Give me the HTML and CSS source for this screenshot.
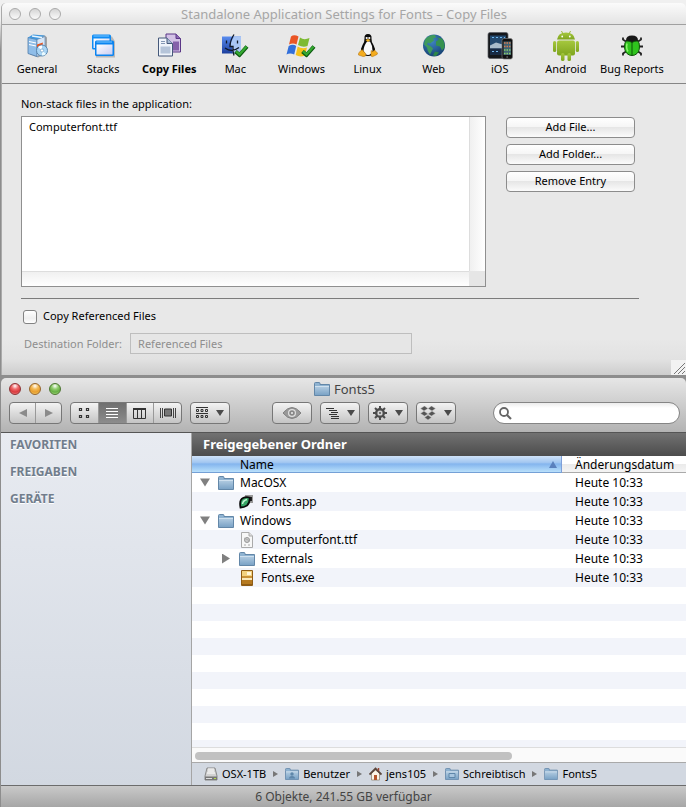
FILE: index.html
```html
<!DOCTYPE html>
<html lang="de">
<head>
<meta charset="utf-8">
<meta name="viewport" content="width=device-width, initial-scale=1">
<title>Standalone Application Settings</title>
<link rel="stylesheet" href="styles.css">
</head>
<body>
<svg class="defs" aria-hidden="true">
  <defs>
    <linearGradient id="gFolder" x1="0" y1="0" x2="0" y2="1"><stop offset="0" stop-color="#b4cde2"/><stop offset="1" stop-color="#7ba3c6"/></linearGradient>
    <linearGradient id="gBlue" x1="0" y1="0" x2="0" y2="1"><stop offset="0" stop-color="#5a8df0"/><stop offset="1" stop-color="#1c3f9e"/></linearGradient>
    <linearGradient id="gPane" x1="0" y1="0" x2="1" y2="1"><stop offset="0" stop-color="#ffffff"/><stop offset="1" stop-color="#c9cdf2"/></linearGradient>
    <linearGradient id="gDroid" x1="0" y1="0" x2="0" y2="1"><stop offset="0" stop-color="#a6c83e"/><stop offset="1" stop-color="#7fa51f"/></linearGradient>
    <radialGradient id="gGlobe" cx=".4" cy=".3" r=".8"><stop offset="0" stop-color="#3f86c4"/><stop offset="1" stop-color="#123a6b"/></radialGradient>
    <symbol id="folder" viewBox="0 0 16 14">
      <path d="M.5 3V1.5Q.5.5 1.5.5H5Q6 .5 6 1.5V2.500H15.500V13.500H.5z" fill="#8fb3d1" stroke="#6387a8"/>
      <path d="M1 4H15V13H1z" fill="url(#gFolder)"/>
      <path d="M1 4.500H15" stroke="#cfe0ee"/>
    </symbol>
    <symbol id="check" viewBox="0 0 15 13">
      <path d="M1.500 7 L5.500 10.500 L13 2" fill="none" stroke="#0c5a10" stroke-width="4"/>
      <path d="M2 6.800 L5.500 9.800 L12.600 2" fill="none" stroke="#35a832" stroke-width="2.400"/>
    </symbol>
  </defs>
</svg>

<main class="desktop">
<section class="window settings">
  <header class="titlebar">
    <div class="lights idle"><button type="button" aria-label="Close"></button><button type="button" aria-label="Minimize"></button><button type="button" aria-label="Zoom"></button></div>
    <h1>Standalone Application Settings for Fonts – Copy Files</h1>
  </header>

  <nav class="tabs">
    <button type="button">
      <svg width="24" height="24" viewBox="0 0 24 24"><path d="M5 5L10 2H20L22 4V20L13 24 5 21z" fill="#777" opacity=".6"/><path d="M3 4L12 6V23L3 20z" fill="#8fbde8" stroke="#4f7ba8" stroke-width=".8"/><path d="M12 6L20 3V19L12 23z" fill="#d5e6f8" stroke="#6e90b5" stroke-width=".8"/><path d="M3 4L8 1 20 2 12 6z" fill="#3f97de"/><path d="M7 2.500L17 4" stroke="#e9f6ff" stroke-width="1.500"/><path d="M4 8L11 9.500M4 11L11 12.500" stroke="#fff" stroke-width="1.200"/><path d="M12 11L18 9 17 14 12 18z" fill="#e8531e"/><circle cx="17" cy="17" r="5.500" fill="#a8d4f5" stroke="#5b88af"/><path d="M17 17L13 13.500A5 5 0 0 1 17 12z" fill="#fff"/><path d="M17 17L21 20.500A5 5 0 0 1 17 22z" fill="#eafaff"/><circle cx="17" cy="17" r="1.600" fill="#fff" stroke="#6b9cc4" stroke-width=".7"/></svg>
      <span>General</span></button>
    <button type="button">
      <svg width="24" height="24" viewBox="0 0 24 24"><path d="M3 3H21L24 8V24H5z" fill="#888" opacity=".5"/><rect x="1" y="1" width="19" height="15" rx="1.500" fill="#0f8cf5"/><rect x="2.500" y="5" width="16" height="9.500" fill="url(#gPane)"/><path d="M2.500 2.500H18" stroke="#7cc8ff"/><rect x="4" y="7" width="19" height="15.500" rx="1.500" fill="#0a84f0"/><rect x="5.500" y="11" width="16" height="10" fill="url(#gPane)"/><path d="M5.500 8.500H21" stroke="#7cc8ff"/></svg>
      <span>Stacks</span></button>
    <button type="button" class="active" aria-current="page">
      <svg width="24" height="24" viewBox="0 0 24 24"><path d="M9 .5H19L23.500 5V18.500H9z" fill="#d3c2e6" stroke="#5b3787"/><path d="M19 .5V5H23.500" fill="#8d68b5" stroke="#5b3787"/><path d="M16 8H22V17H16z" fill="#8560aa"/><path d="M1.500 4.500H10L15.500 10V22.500H1.500z" fill="#eff4fb" stroke="#46597a"/><path d="M10 4.500V10H15.500" fill="#a7bbd4" stroke="#46597a"/><path d="M4 8H8M4 10H8" stroke="#8598b5"/><path d="M3.500 13H13.500V20H3.500z" fill="#b5c4d9"/></svg>
      <span>Copy Files</span></button>
    <button type="button">
      <svg width="28" height="24" viewBox="0 0 28 24"><path d="M1 3H20V20H1z" fill="url(#gBlue)"/><path d="M13 3H20V20H12Q11 17 11 13H9Q10 7 13 3z" fill="#a9c6f5"/><path d="M13 1Q9 7 9 13H12Q11.500 18 13 22M5.500 7V10M16.500 7V10M4 14.500Q11 19.500 18 14" fill="none" stroke="#101828" stroke-width="1.300"/><use href="#check" x="13" y="11" width="15" height="13"/></svg>
      <span>Mac</span></button>
    <button type="button">
      <svg width="30" height="24" viewBox="0 0 30 24"><path d="M5 3Q8 .5 12.500 3L10.500 11Q7 9 3 11z" fill="#ea5525"/><path d="M14 4Q18 7 23.500 4.500L21.500 12.500Q17 14.500 12 11.500z" fill="#7dba32"/><path d="M2.700 12.500Q7 10 10.200 12.500L8.200 21Q4 19 .5 21z" fill="#326fdb"/><path d="M11.700 13Q16 16 21 14L19 22Q14 24 9.700 21.500z" fill="#f5c21b"/><use href="#check" x="15" y="11" width="15" height="13"/></svg>
      <span>Windows</span></button>
    <button type="button">
      <svg width="20" height="24" viewBox="0 0 20 24"><path d="M10 .5Q6 .5 6.500 5Q6.800 8 4.500 11.500Q2.500 15 3 19Q6 22.500 10 22.500T17 19Q17.500 15 15.500 11.500Q13.200 8 13.500 5Q14 .5 10 .5z" fill="#0a0a0a"/><path d="M9 8Q5.500 13 5.500 17Q7 21.500 10 21.500T14.500 17Q14.500 12 12 8z" fill="#fafafa"/><circle cx="8.700" cy="4.500" r="1.100" fill="#fff"/><circle cx="11.300" cy="4.500" r="1.100" fill="#fff"/><path d="M7.500 6.500L10 5.500 12.500 6.500 10 8.500z" fill="#f2b01e"/><path d="M4 16L8 20.500Q8 23.500 5 23L.5 21.500Q0 20 1.500 18.500z" fill="#f4ac1f" stroke="#ad6d0c" stroke-width=".5"/><path d="M13 17Q15 19 16.500 16.500L19.500 19.500Q20 21 17 22Q14 24 13 22.500z" fill="#f4ac1f" stroke="#ad6d0c" stroke-width=".5"/></svg>
      <span>Linux</span></button>
    <button type="button">
      <svg width="24" height="24" viewBox="0 0 24 24"><circle cx="12" cy="12" r="11" fill="url(#gGlobe)"/><path d="M3 6Q7 1 13 1.500L14 4 11 5 12 7 8 10 6 9 5 11 9 13 11 15 8 21Q5 17 5 14L2 11z" fill="#3f9a5c"/><path d="M15 4L20 5Q23 9 22.500 14L20 17 18 13 14 12 14 8 17 6z" fill="#35914f"/><path d="M13 18L17 19 14 22.500 11 22z" fill="#2e8748"/></svg>
      <span>Web</span></button>
    <button type="button">
      <svg width="26" height="28" viewBox="0 0 26 28"><rect x="1" y="1" width="20" height="26" rx="2" fill="#15171b" stroke="#5c5f66" stroke-width=".7"/><rect x="3" y="4" width="16" height="19" fill="#24496e"/><path d="M3 14L9 11 19 14V17H3z" fill="#a9bccb"/><path d="M3 17H19V23H3z" fill="#182a44"/><path d="M5 6H7M9 6H11M13 6H15M17 6H18M5 20H7M9 20H11" stroke="#6fb7ee"/><rect x="15" y="7" width="10.500" height="20.500" rx="2" fill="#111" stroke="#777" stroke-width=".7"/><rect x="16.500" y="10" width="7.500" height="13.500" fill="#3f6273"/><path d="M17 11.500H24M17 15H24" stroke="#d97a4c" stroke-width="1.500" stroke-dasharray="1.500 1"/><path d="M17 18.500H24M17 22H24" stroke="#8bd06a" stroke-width="1.500" stroke-dasharray="1.500 1"/><circle cx="20.200" cy="25.500" r="1" fill="#555"/></svg>
      <span>iOS</span></button>
    <button type="button">
      <svg width="28" height="31" viewBox="0 0 28 31"><g fill="url(#gDroid)"><path d="M5 9.500Q6 2.500 14 2.500T23 9.500z"/><rect x="5" y="10.500" width="18" height="15" rx="2"/><rect x="1" y="11" width="3.200" height="11" rx="1.600"/><rect x="23.800" y="11" width="3.200" height="11" rx="1.600"/><rect x="9" y="23" width="3.500" height="8" rx="1.600"/><rect x="15.500" y="23" width="3.500" height="8" rx="1.600"/></g><path d="M9.500 1L11 4M18.500 1L17 4" stroke="#97b936"/><circle cx="10.200" cy="6.500" r=".9" fill="#fff"/><circle cx="17.800" cy="6.500" r=".9" fill="#fff"/></svg>
      <span>Android</span></button>
    <button type="button">
      <svg width="24" height="24" viewBox="0 0 24 24"><path d="M6 8L3 6V4M18 8L21 6V4M5 13H1M19 13H23M6 18L3 20V22M18 18L21 20V22" fill="none" stroke="#222" stroke-width="1.800"/><path d="M6 7Q6 2 12 2T18 7L16 10H8z" fill="#171717"/><path d="M12 9Q7 6 5 9Q3.500 17 7 20Q9 22 12 22T17 20Q20.500 17 19 9Q17 6 12 9z" fill="#2fc41d" stroke="#0d5208"/><path d="M7 10Q6 15 8 18" fill="none" stroke="#8cf56c" stroke-width="1.500"/><path d="M12 9V22" stroke="#0d5208"/></svg>
      <span>Bug Reports</span></button>
  </nav>

  <div class="pane">
    <p class="caption" id="files-caption">Non-stack files in the application:</p>
    <div class="files">
      <div class="listbox">
        <ul aria-labelledby="files-caption"><li>Computerfont.ttf</li></ul>
        <div class="track-v"></div><div class="track-h"></div><div class="track-corner"></div>
      </div>
      <div class="actions">
        <button type="button">Add File...</button>
        <button type="button">Add Folder...</button>
        <button type="button">Remove Entry</button>
      </div>
    </div>
    <hr>
    <div class="option"><input type="checkbox" id="copy-ref"><label for="copy-ref">Copy Referenced Files</label></div>
    <div class="destination"><label for="dest">Destination Folder:</label><input type="text" id="dest" value="Referenced Files" disabled></div>
  </div>
  <svg class="grip" width="15" height="15" viewBox="0 0 15 15"><path d="M3 14L14 3M7 14L14 7M11 14L14 11" stroke="#777"/></svg>
</section>

<section class="window finder">
  <header class="chrome">
    <div class="titlerow">
      <div class="lights"><button type="button" class="red" aria-label="Schließen"></button><button type="button" class="amber" aria-label="Minimieren"></button><button type="button" class="green" aria-label="Zoomen"></button></div>
      <h2><svg width="16" height="14"><use href="#folder"/></svg>Fonts5</h2>
    </div>
    <div class="toolbar">
      <div class="group nav">
        <button type="button" aria-label="Zurück"><svg width="10" height="10" viewBox="0 0 10 10"><path d="M9 1V9L1 5z" fill="#8b8b8b"/></svg></button>
        <button type="button" aria-label="Vorwärts"><svg width="10" height="10" viewBox="0 0 10 10"><path d="M1 1V9L9 5z" fill="#8b8b8b"/></svg></button>
      </div>
      <div class="group views">
        <button type="button" aria-label="Symbole"><svg width="12" height="12" viewBox="0 0 12 12"><path d="M1.500 1.500h2v2h-2zM8.500 1.500h2v2h-2zM1.500 8.500h2v2h-2zM8.500 8.500h2v2h-2z" fill="none" stroke="#333" stroke-width="1.200"/></svg></button>
        <button type="button" class="on" aria-label="Liste" aria-pressed="true"><svg width="12" height="12" viewBox="0 0 12 12"><path d="M0 1.500H12M0 4.500H12M0 7.500H12M0 10.500H12" stroke="#fff"/></svg></button>
        <button type="button" aria-label="Spalten"><svg width="13" height="11" viewBox="0 0 13 11"><path d="M.5 1V10.500H12.500V1M4.500 1V10M8.500 1V10" fill="none" stroke="#333"/><path d="M0 1H13" stroke="#333" stroke-width="2"/></svg></button>
        <button type="button" aria-label="Cover Flow"><svg width="16" height="12" viewBox="0 0 16 12"><path d="M.5 1V11M2.500 1V11M13.500 1V11M15.500 1V11" stroke="#444"/><path d="M4.500 2H11.500V9H4.500z" fill="#777" stroke="#333"/></svg></button>
      </div>
      <button type="button" class="tool" aria-label="Ausrichten"><svg width="12" height="12" viewBox="0 0 12 12"><path d="M0 .5H12M0 6.500H12" stroke="#333"/><path d="M.5 2.500h2v2h-2zM5 2.500h2v2h-2zM9.500 2.500h2v2h-2zM.5 8.500h2v2h-2zM5 8.500h2v2h-2zM9.500 8.500h2v2h-2z" fill="none" stroke="#333"/></svg><i class="caret"></i></button>
      <button type="button" class="tool eye" aria-label="Übersicht"><svg width="20" height="12" viewBox="0 0 20 12"><path d="M1 6Q10-5 19 6Q10 17 1 6z" fill="#999" stroke="#818181"/><circle cx="10" cy="6" r="4" fill="#e0e0e0"/><circle cx="10" cy="6" r="2.800" fill="#888"/><circle cx="10" cy="6" r="1" fill="#eee"/></svg></button>
      <button type="button" class="tool" aria-label="Gliederung"><svg width="13" height="12" viewBox="0 0 13 12"><path d="M0 1.500H8M3 3.500H11M5 5.500H12M3 7.500H11M5 9.500H13M5 11.500H13" stroke="#333"/></svg><i class="caret"></i></button>
      <button type="button" class="tool" aria-label="Aktionen"><svg width="14" height="14" viewBox="0 0 14 14"><path d="M7 0V14M0 7H14M2 2L12 12M12 2L2 12" stroke="#4b4b4b" stroke-width="2"/><circle cx="7" cy="7" r="4" fill="none" stroke="#4b4b4b" stroke-width="2"/><circle cx="7" cy="7" r="2.600" fill="#d2d2d2"/><circle cx="7" cy="7" r="1" fill="#555"/></svg><i class="caret"></i></button>
      <button type="button" class="tool" aria-label="Dropbox"><svg width="16" height="14" viewBox="0 0 16 14"><path d="M4.500 0L8 2.500 4 5 .5 2.500zM11.500 0L8 2.500 12 5 15.500 2.500zM4 5L8 8 4.500 10 .5 7.500zM12 5L8 8 11.500 10 15.500 7.500zM8 9L11.500 11.500 8 14 4.500 11.500z" fill="#555" stroke="#cfcfcf" stroke-width=".5"/></svg><i class="caret"></i></button>
      <label class="search"><svg width="13" height="13" viewBox="0 0 13 13"><circle cx="5" cy="5" r="4" fill="none" stroke="#666" stroke-width="1.800"/><path d="M8 8L12 12" stroke="#666" stroke-width="2.200"/></svg><input type="search" aria-label="Suchen"></label>
    </div>
  </header>

  <div class="body">
    <aside class="sidebar"><h3>FAVORITEN</h3><h3>FREIGABEN</h3><h3>GERÄTE</h3></aside>
    <div class="content">
      <h3 class="banner">Freigegebener Ordner</h3>
      <table>
        <thead><tr><th class="name">Name<svg width="8" height="7" viewBox="0 0 8 7"><path d="M4 0L8 7H0z" fill="#5a80bd"/></svg></th><th>Änderungsdatum</th></tr></thead>
        <tbody>
          <tr><td><div class="cell"><i class="tri open"></i><svg width="16" height="14"><use href="#folder"/></svg>MacOSX</div></td><td>Heute 10:33</td></tr>
          <tr><td><div class="cell child"><i class="tri"></i><svg width="16" height="16" viewBox="0 0 16 16"><path d="M6 1H14V9H6z" fill="#999"/><path d="M9 3H13V7H9z" fill="#222"/><path d="M1.500 13.500Q0 6 4 4Q7 2.500 10.500 3.500Q11 9 8 11.500Q5 13.500 1.500 13.500z" fill="#38a566" stroke="#0a0a0a" stroke-width="1.800"/><path d="M3.500 10Q4 6.500 8 5.500" stroke="#c6f5d6" fill="none" stroke-width="1.400"/></svg>Fonts.app</div></td><td>Heute 10:33</td></tr>
          <tr><td><div class="cell"><i class="tri open"></i><svg width="16" height="14"><use href="#folder"/></svg>Windows</div></td><td>Heute 10:33</td></tr>
          <tr><td><div class="cell child"><i class="tri"></i><svg width="16" height="16" viewBox="0 0 16 16"><path d="M2.500.5H10L13.500 4V15.500H2.500z" fill="#f7f7f7" stroke="#aaa"/><path d="M10 .5V4H13.500" fill="#ddd" stroke="#aaa"/><circle cx="8" cy="8" r="2.500" fill="#ccc" stroke="#999"/><path d="M5 6L11 9M5 13H7M9 13H11" stroke="#aaa"/></svg>Computerfont.ttf</div></td><td>Heute 10:33</td></tr>
          <tr><td><div class="cell child"><i class="tri closed"></i><svg width="16" height="14"><use href="#folder"/></svg>Externals</div></td><td>Heute 10:33</td></tr>
          <tr><td><div class="cell child"><i class="tri"></i><svg width="16" height="16" viewBox="0 0 16 16"><rect x="2" y="0" width="12" height="16" rx="1" fill="#8f5c14"/><path d="M3 1H13V6H3z" fill="#f3d27f"/><path d="M8 2H12V5H8z" fill="#fff6dc"/><path d="M3 6H13V8H3z" fill="#c99238"/><path d="M3 8H13V10H3z" fill="#fbe9bb"/><path d="M3 10H13V14H3z" fill="#b67a20"/></svg>Fonts.exe</div></td><td>Heute 10:33</td></tr>
        </tbody>
      </table>
      <div class="stripes"></div>
      <div class="scroller"><div class="thumb"></div></div>
      <nav class="path">
        <a href="#"><svg width="14" height="14" viewBox="0 0 14 14"><path d="M3 1H11L13 9V13H1V9z" fill="#d2d2d2" stroke="#888"/><path d="M4 2H10M4 4H10M3 6H11" stroke="#fff"/><path d="M1 9.500H13V13H1z" fill="#777"/><path d="M2 11.500H8" stroke="#ddd"/><path d="M10 11.500H12" stroke="#b7dd45"/></svg>OSX-1TB</a><i class="sep"></i>
        <a href="#"><svg width="14" height="12" viewBox="0 0 14 12"><use href="#folder" width="14" height="12"/><circle cx="7" cy="6" r="1.700" fill="#5f87aa"/><path d="M4 10.500Q4 8 7 8T10 10.500z" fill="#5f87aa"/></svg>Benutzer</a><i class="sep"></i>
        <a href="#"><svg width="13" height="14" viewBox="0 0 13 14"><path d="M2.500 6V13H10.500V6L6.500 3z" fill="#fbf4e7" stroke="#877963" stroke-width=".7"/><path d="M.5 7.500L6.500 1.500 12.500 7.500" fill="none" stroke="#5a463b" stroke-width="1.800"/><path d="M5 8H8V13H5z" fill="#b4552b"/><path d="M9.500 1V4" stroke="#9b4532" stroke-width="1.500"/></svg>jens105</a><i class="sep"></i>
        <a href="#"><svg width="14" height="12" viewBox="0 0 14 12"><use href="#folder" width="14" height="12"/><path d="M4 5.500H10V9.500H4z" fill="#a9c6df" stroke="#5f87aa"/></svg>Schreibtisch</a><i class="sep"></i>
        <a href="#"><svg width="14" height="12" viewBox="0 0 16 14"><use href="#folder" width="16" height="14"/></svg>Fonts5</a>
      </nav>
    </div>
  </div>
  <footer class="status">6 Objekte, 241.55 GB verfügbar</footer>
</section>
</main>
</body>
</html>
```
FILE: styles.css
```css
* { box-sizing: border-box; }

body {
  margin: 0;
  font-family: "Noto Sans", "Open Sans", sans-serif;
  font-size: 11px;
  line-height: 16px;
  color: #000;
  background: #8d8d8d;
}

h1, h2, h3, p, ul { margin: 0; padding: 0; font-weight: normal; }
ul { list-style: none; }
button, input { font: inherit; color: inherit; }
button { padding: 0; border: 0; background: none; }
svg { display: block; flex: none; }
.defs { position: absolute; width: 0; height: 0; }

.desktop {
  display: flex;
  flex-direction: column;
  gap: 3px;
  min-height: 100vh;
  padding: 3px 0 0 1px;
  background: linear-gradient(#f0f0f0 0, #f0f0f0 20px, #8d8d8d 50px);
}

/* Window controls */
.lights { display: flex; gap: 8px; }
.lights button {
  width: 12px;
  height: 12px;
  border-radius: 50%;
  border: 1px solid #777;
}
.lights.idle button { border-color: #aaa; background: linear-gradient(#d5d5d5, #fafafa); }
.lights .red { border-color: #8d3133; background: radial-gradient(circle at 50% 20%, #fff 0, #f0686a 35%, #d83a3d 65%, #f99 100%); }
.lights .amber { border-color: #96642a; background: radial-gradient(circle at 50% 20%, #fff 0, #f4ba55 35%, #e79d2d 65%, #fde07a 100%); }
.lights .green { border-color: #4b752f; background: radial-gradient(circle at 50% 20%, #fff 0, #8fcc6c 35%, #65ae43 65%, #c5f09a 100%); }

/* Settings window */
.settings {
  position: relative;
  border-left: 1px solid #aaa;
  border-radius: 5px 5px 0 0;
  background: linear-gradient(to top, #cdcdcd 0, #e2e2e2 16px, #e8e8e8 36px);
}
.titlebar {
  display: grid;
  grid-template-columns: 60px 1fr 60px;
  align-items: center;
  height: 22px;
  padding: 0 7px;
  border-bottom: 1px solid #a0a0a0;
  border-radius: 5px 5px 0 0;
  background: linear-gradient(#fbfbfb, #e4e4e4);
}
.titlebar h1 { font-size: 13px; color: #a6a6a6; text-align: center; white-space: nowrap; }

.tabs {
  display: grid;
  grid-template-columns: repeat(10, 1fr);
  height: 59px;
  padding: 5px 21px 0 2px;
  border-bottom: 1px solid #858585;
}
.tabs button {
  display: flex;
  flex-direction: column;
  align-items: center;
  justify-content: flex-start;
  min-width: 0;
  white-space: nowrap;
}
.tabs svg { height: 31px; }
.tabs .active { font-weight: bold; }

.pane { padding: 12px 47px 21px 19px; }
.caption { margin-bottom: 4px; }
.files { display: flex; gap: 20px; padding-right: 4px; }
.listbox {
  flex: 1;
  display: grid;
  grid-template-columns: 1fr 16px;
  grid-template-rows: 1fr 15px;
  height: 171px;
  border: 1px solid #8f8f8f;
  background: #fff;
}
.listbox ul { padding: 2px 7px; }
.track-v { border-left: 1px solid #ddd; background: linear-gradient(to right, #f0f0f0, #fff); }
.track-h { border-top: 1px solid #ddd; background: linear-gradient(#f0f0f0, #fff); }
.track-corner { background: #e6e6e6; }
.actions { display: flex; flex-direction: column; gap: 6px; width: 129px; padding-top: 1px; }
.actions button {
  height: 21px;
  padding-bottom: 2px;
  border: 1px solid #8c8c8c;
  border-radius: 4px;
  background: linear-gradient(#fff 0, #f6f6f6 45%, #e6e6e6 50%, #fbfbfb 100%);
  line-height: 16px;
}
hr { height: 1px; margin: 11px 0 9px; border: 0; background: #7c7c7c; }
.option { display: flex; align-items: center; gap: 6px; padding-left: 1px; }
.option input {
  appearance: none;
  width: 14px;
  height: 14px;
  margin: 2px 0 0 1px;
  border: 1px solid #828282;
  border-radius: 3px;
  background: linear-gradient(#fff, #eee 60%, #fff);
}
.destination { display: flex; align-items: center; gap: 8px; margin-top: 9px; padding-left: 3px; color: #8e8e8e; }
.destination input {
  width: 282px;
  height: 21px;
  padding: 0 7px;
  border: 1px solid #bebebe;
  background: #e6e6e6;
}
.grip { position: absolute; right: 0; bottom: 0; background: #f2f2f2; }

/* Finder window */
.finder { flex: 1; display: flex; flex-direction: column; border-radius: 5px 5px 0 0; }
.chrome {
  height: 55px;
  padding: 0 6px 0 8px;
  border-bottom: 1px solid #555;
  border-radius: 5px 5px 0 0;
  background: linear-gradient(#e6e6e6, #b3b3b3);
}
.titlerow {
  display: grid;
  grid-template-columns: 60px 1fr 60px;
  align-items: center;
  height: 22px;
  margin-bottom: 2px;
}
.titlerow h2 {
  display: flex;
  align-items: center;
  justify-content: center;
  gap: 4px;
  font-size: 13px;
  color: #444;
}
.toolbar { display: flex; gap: 8px; height: 22px; }
.group, .tool {
  display: flex;
  align-items: center;
  justify-content: center;
  height: 22px;
  border: 1px solid #777;
  border-radius: 4px;
  background: linear-gradient(#f3f3f3, #c4c4c4);
}
.tool { gap: 8px; width: 40px; }
.tool.eye { margin-left: 34px; }
.group button {
  flex: 1;
  display: flex;
  align-items: center;
  justify-content: center;
  height: 20px;
}
.group button + button { border-left: 1px solid #999; }
.nav { width: 53px; }
.views { width: 112px; }
.views .on { background: linear-gradient(#6f6f6f, #8c8c8c); }
.caret { border: 4px solid transparent; border-top: 6px solid #4b4b4b; border-bottom: 0; }
.search {
  flex: 1;
  display: flex;
  align-items: center;
  gap: 4px;
  min-width: 80px;
  height: 22px;
  margin-left: 29px;
  padding: 0 6px 0 5px;
  border: 1px solid #858585;
  border-radius: 11px;
  background: linear-gradient(#ececec, #fff 5px);
}
.search input { flex: 1; min-width: 0; border: 0; outline: 0; background: none; }

.body { flex: 1; display: flex; }
.sidebar {
  width: 191px;
  padding: 4px 9px;
  border-right: 1px solid #a5a5a5;
  background: linear-gradient(#e8ebf1, #d2d8e1);
}
.sidebar h3 { margin-bottom: 11px; font-size: 12px; font-weight: bold; color: #717d8c; text-shadow: 0 1px 0 #fff; }
.content { flex: 1; min-width: 0; display: flex; flex-direction: column; background: #fff; }
.banner {
  height: 23px;
  padding: 0 11px;
  font-size: 13px;
  font-weight: bold;
  line-height: 22px;
  color: #fff;
  background: linear-gradient(#727272, #4c4c4c);
}

table { width: 100%; border-spacing: 0; table-layout: fixed; font-size: 12px; }
th {
  height: 17px;
  padding: 1px 0 0 14px;
  border-bottom: 1px solid #aaa;
  font-weight: normal;
  line-height: 15px;
  text-align: left;
  background: linear-gradient(#fff 0, #fff 50%, #eaeaea 50%, #f4f4f4 100%);
}
th.name {
  width: 370px;
  padding-left: 48px;
  border-right: 1px solid #7f9fd8;
  border-bottom-color: #74a0d6;
  background: linear-gradient(#cfe2f8 0, #a3c7f1 40%, #84b5ee 50%, #b9e0fb 100%);
}
th.name svg { float: right; margin: 4px 4px 0 0; }
td { height: 19px; padding: 0 0 0 13px; line-height: 19px; white-space: nowrap; }
th:last-child { padding-left: 13px; }
td:first-child { padding-left: 7px; }
tbody tr:nth-child(even) { background: #f2f4fa; }
.cell { display: flex; align-items: center; gap: 6px; height: 19px; }
.cell svg { margin-left: 1px; }
.child { padding-left: 21px; }
.tri { width: 12px; height: 10px; }
.tri.open { background: #808080; clip-path: polygon(1px 1px, 11px 1px, 6px 9px); }
.tri.closed { background: #808080; clip-path: polygon(2px 0, 10px 5px, 2px 10px); }
.stripes { flex: 1; min-height: 34px; background: repeating-linear-gradient(#fff 0, #fff 17px, #f2f4fa 17px, #f2f4fa 34px); }
.scroller { height: 15px; padding: 4px 3px 3px; border-top: 1px solid #ddd; background: #fafafa; }
.thumb { width: 65%; height: 8px; border-radius: 4px; background: #c1c1c1; }

.path {
  display: flex;
  align-items: center;
  gap: 7px;
  height: 23px;
  width: 100%;
  padding: 0 12px;
  border-top: 1px solid #a9a9a9;
  background: #d2d8e1;
}
.path a { display: flex; align-items: center; gap: 4px; color: inherit; text-decoration: none; white-space: nowrap; }
.sep { border: 3px solid transparent; border-left: 5px solid #777; border-right: 0; }
.status {
  height: 22px;
  border-top: 1px solid #6c6c6c;
  background: linear-gradient(#c9c9c9, #a6a6a6);
  font-size: 12px;
  line-height: 22px;
  text-align: center;
  color: #444;
}
```
